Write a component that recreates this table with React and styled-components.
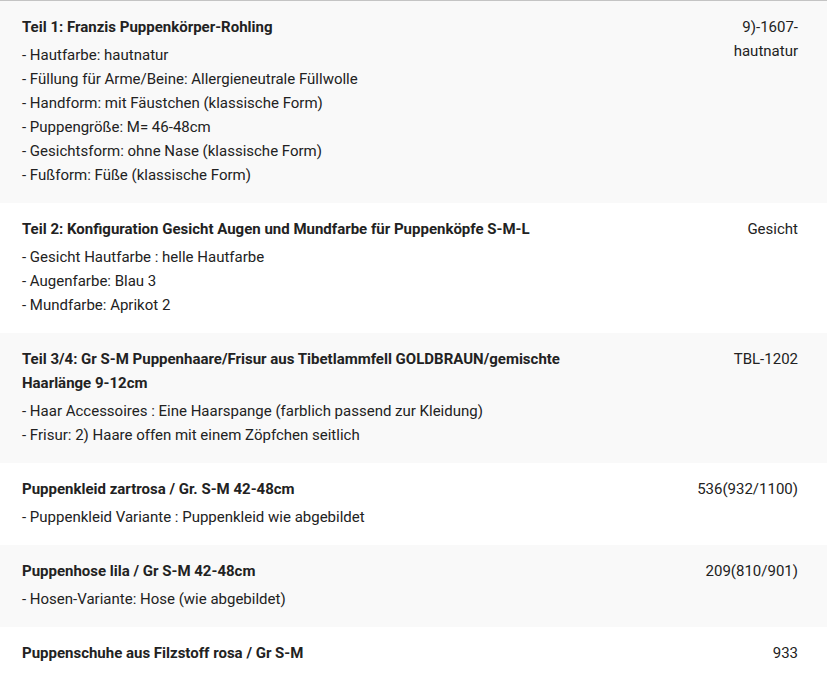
import React from "react";
import styled, { createGlobalStyle } from "styled-components";

const Global = createGlobalStyle`
  html, body { margin: 0; padding: 0; background: #fff; }
  body { font-family: Roboto, "Liberation Sans", Arial, sans-serif; color: #222; }
`;

const Table = styled.div`
  border-top: 1px solid #c4c4c4;
  width: 827px;
`;

const Row = styled.div`
  display: grid;
  grid-template-columns: 1fr 110px;
  column-gap: 66px;
  padding: 14px 29px 16px 22px;
  background: ${(p) => (p.$alt ? "#f9f9f9" : "#fff")};
`;

const Title = styled.div`
  font-size: 15px;
  font-weight: 700;
  line-height: 24px;
  color: #222;
  margin-bottom: 4px;
`;

const Line = styled.div`
  font-size: 15px;
  line-height: 24px;
  color: #222;
`;

const Sku = styled.div`
  font-size: 15px;
  line-height: 24px;
  color: #222;
  text-align: right;
`;

const rows = [
  {
    title: "Teil 1: Franzis Puppenkörper-Rohling",
    sku: "9)-1607-hautnatur",
    lines: [
      "- Hautfarbe: hautnatur",
      "- Füllung für Arme/Beine: Allergieneutrale Füllwolle",
      "- Handform: mit Fäustchen (klassische Form)",
      "- Puppengröße: M= 46-48cm",
      "- Gesichtsform: ohne Nase (klassische Form)",
      "- Fußform: Füße (klassische Form)",
    ],
  },
  {
    title: "Teil 2: Konfiguration Gesicht Augen und Mundfarbe für Puppenköpfe S-M-L",
    sku: "Gesicht",
    lines: [
      "- Gesicht Hautfarbe : helle Hautfarbe",
      "- Augenfarbe: Blau 3",
      "- Mundfarbe: Aprikot 2",
    ],
  },
  {
    title:
      "Teil 3/4: Gr S-M Puppenhaare/Frisur aus Tibetlammfell GOLDBRAUN/gemischte Haarlänge 9-12cm",
    sku: "TBL-1202",
    lines: [
      "- Haar Accessoires : Eine Haarspange (farblich passend zur Kleidung)",
      "- Frisur: 2) Haare offen mit einem Zöpfchen seitlich",
    ],
  },
  {
    title: "Puppenkleid zartrosa / Gr. S-M 42-48cm",
    sku: "536(932/1100)",
    lines: ["- Puppenkleid Variante : Puppenkleid wie abgebildet"],
  },
  {
    title: "Puppenhose lila / Gr S-M 42-48cm",
    sku: "209(810/901)",
    lines: ["- Hosen-Variante: Hose (wie abgebildet)"],
  },
  {
    title: "Puppenschuhe aus Filzstoff rosa / Gr S-M",
    sku: "933",
    lines: [],
  },
];

export default function App() {
  return (
    <>
      <Global />
      <Table>
        {rows.map((r, i) => (
          <Row key={i} $alt={i % 2 === 0}>
            <div>
              <Title>{r.title}</Title>
              {r.lines.map((l, j) => (
                <Line key={j}>{l}</Line>
              ))}
            </div>
            <Sku>{r.sku}</Sku>
          </Row>
        ))}
      </Table>
    </>
  );
}
